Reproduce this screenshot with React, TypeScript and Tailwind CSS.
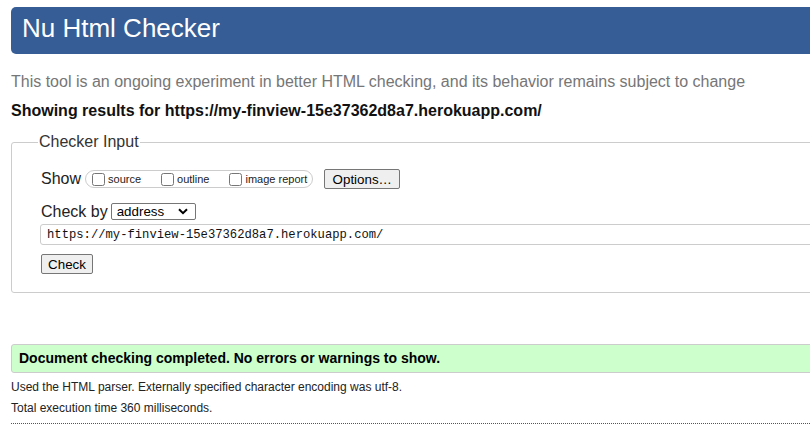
import React from 'react';

const showOptions = [
  { id: 'source', label: 'source' },
  { id: 'outline', label: 'outline' },
  { id: 'image', label: 'image report' },
];

const url = 'https://my-finview-15e37362d8a7.herokuapp.com/';

const App: React.FC = () => {
  return (
    <div className="min-h-[437px] w-full overflow-hidden bg-white font-['Liberation_Sans',Arial,sans-serif]">
      <div className="w-[840px] pl-[11px] pt-[7px]">
        {/* Header */}
        <div className="h-[47px] rounded-[5px] bg-[#365d95] pl-[11px] pt-[7px]">
          <h1 className="text-[26px] leading-[29px] text-white">Nu Html Checker</h1>
        </div>

        <p className="mt-[19px] text-[16px] leading-[18px] text-[#767676]">
          This tool is an ongoing experiment in better HTML checking, and its behavior remains subject to change
        </p>
        <p className="mt-[11px] text-[16px] font-bold leading-[18px] text-[#111]">
          Showing results for {url}
        </p>

        {/* Checker Input */}
        <fieldset className="mt-[13px] rounded-[3px] border border-[#cccccc] pb-[18px] pl-[29px]">
          <legend className="-ml-[3px] px-[1px] text-[16px] leading-[18px] text-[#333]">Checker Input</legend>

          <div className="mt-[18px] flex h-[20px] items-center">
            <span className="text-[16px] leading-[18px] text-[#222]">Show</span>
            <div className="ml-[4px] flex h-[18px] items-center rounded-full border border-[#cccccc] pl-[6px] pr-[5px] text-[11px] text-[#222]">
              {showOptions.map((opt, i) => (
                <label key={opt.id} className={`flex items-center ${i < showOptions.length - 1 ? 'mr-[20px]' : ''}`}>
                  <input type="checkbox" className="m-0 h-[13px] w-[13px]" />
                  <span className="ml-[3px]">{opt.label}</span>
                </label>
              ))}
            </div>
            <button className="ml-[11px] h-[20px] w-[76px] rounded-[2px] border border-[#767676] bg-[#efefef] text-[13.33px] text-black">
              Options…
            </button>
          </div>

          <div className="mt-[13px] flex h-[19px] items-center">
            <span className="text-[16px] leading-[18px] text-[#222]">Check by</span>
            <div className="ml-[3px] flex h-[17px] w-[85px] items-center justify-between rounded-[2px] border border-[#767676] bg-white pl-[5px] pr-[7px]">
              <span className="text-[13.33px] leading-[15px] text-black">address</span>
              <svg width="10" height="7" viewBox="0 0 10 7">
                <path d="M1 1.2 L5 5.2 L9 1.2" fill="none" stroke="#000" strokeWidth="2" />
              </svg>
            </div>
          </div>

          <input
            type="text"
            defaultValue={url}
            className="-ml-[1px] mt-[3px] block h-[21px] w-[800px] rounded-[3px] border border-[#cccccc] pl-[6px] font-['Liberation_Mono',monospace] text-[12.2px] text-[#111]"
          />

          <button className="mt-[9px] block h-[20px] w-[52px] rounded-[2px] border border-[#767676] bg-[#efefef] text-[13.33px] text-black">
            Check
          </button>
        </fieldset>

        {/* Result */}
        <div className="mt-[51px] flex h-[29px] items-center rounded-[3px] border border-[#cccccc] bg-[#ccffcc] pl-[7px]">
          <span className="text-[14px] font-bold text-black">Document checking completed. No errors or warnings to show.</span>
        </div>
        <p className="mt-[7px] text-[12px] leading-[14px] text-[#222]">
          Used the HTML parser. Externally specified character encoding was utf-8.
        </p>
        <p className="mt-[7px] text-[12px] leading-[14px] text-[#222]">Total execution time 360 milliseconds.</p>
        <div className="mt-[8px] border-t border-dotted border-[#555]" />
      </div>
    </div>
  );
};

export default App;
